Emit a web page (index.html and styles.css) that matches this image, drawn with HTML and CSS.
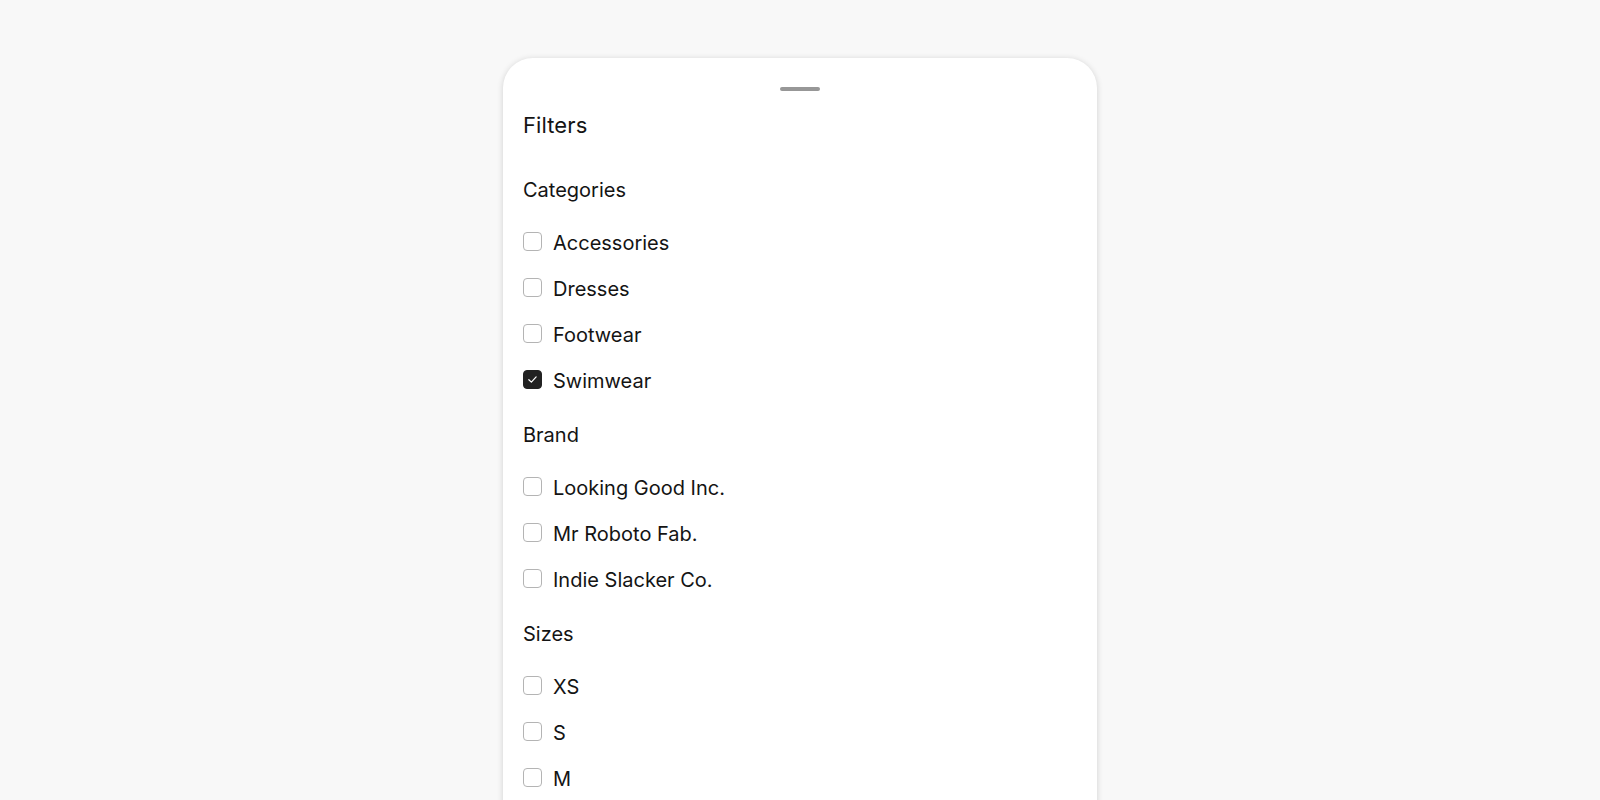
FILE: index.html
```html
<!DOCTYPE html>
<html lang="en">
<head>
<meta charset="utf-8">
<title>Filters</title>
<link rel="stylesheet" href="styles.css">
</head>
<body>
<div class="sheet">
  <div class="handle"></div>
  <h1 class="title">Filters</h1>

  <section class="group">
    <h2 class="group-title">Categories</h2>
    <label class="option"><span class="box"></span><span class="label">Accessories</span></label>
    <label class="option"><span class="box"></span><span class="label">Dresses</span></label>
    <label class="option"><span class="box"></span><span class="label">Footwear</span></label>
    <label class="option"><span class="box checked"><svg viewBox="0 0 16 16" width="13" height="13"><path d="M3.5 8.3 L6.6 11.2 L12.5 4.8" fill="none" stroke="#fff" stroke-width="1.5" stroke-linecap="round" stroke-linejoin="round"/></svg></span><span class="label">Swimwear</span></label>
  </section>

  <section class="group">
    <h2 class="group-title">Brand</h2>
    <label class="option"><span class="box"></span><span class="label">Looking Good Inc.</span></label>
    <label class="option"><span class="box"></span><span class="label">Mr Roboto Fab.</span></label>
    <label class="option"><span class="box"></span><span class="label">Indie Slacker Co.</span></label>
  </section>

  <section class="group">
    <h2 class="group-title">Sizes</h2>
    <label class="option"><span class="box"></span><span class="label">XS</span></label>
    <label class="option"><span class="box"></span><span class="label">S</span></label>
    <label class="option"><span class="box"></span><span class="label">M</span></label>
  </section>
</div>
</body>
</html>
```

FILE: styles.css
```css
html, body {
  margin: 0;
  padding: 0;
  height: 100%;
  overflow: hidden;
}
body {
  background: #f8f8f8;
  font-family: Inter, "Noto Sans", "Liberation Sans", sans-serif;
  color: #141414;
}
.sheet {
  width: 594px;
  margin: 58px auto 0;
  background: #fff;
  border-radius: 30px 30px 0 0;
  box-shadow: 0 1px 6px rgba(0, 0, 0, 0.16);
  padding: 29px 20px 120px;
  box-sizing: border-box;
}
.handle {
  width: 40px;
  height: 4px;
  border-radius: 2px;
  background: #979797;
  margin: 0 auto;
}
.title {
  margin: 20px 0 0;
  font-size: 22px;
  font-weight: 400;
  line-height: 28px;
  height: 28px;
  padding-bottom: 19.5px;
  letter-spacing: 0.1px;
}
.group-title {
  margin: 0;
  padding: 19px 0 18px;
  font-size: 20px;
  font-weight: 400;
  line-height: 24px;
}
.option {
  display: flex;
  align-items: center;
  height: 46px;
  font-size: 20px;
}
.box {
  width: 19px;
  height: 19px;
  box-sizing: border-box;
  border: 1px solid #b4b4b4;
  border-radius: 4px;
  margin-right: 11px;
  display: flex;
  align-items: center;
  justify-content: center;
  margin-top: -2px;
  flex: none;
}
.box.checked {
  background: #222;
  border-color: #222;
}
.label {
  line-height: 24px;
}
```
